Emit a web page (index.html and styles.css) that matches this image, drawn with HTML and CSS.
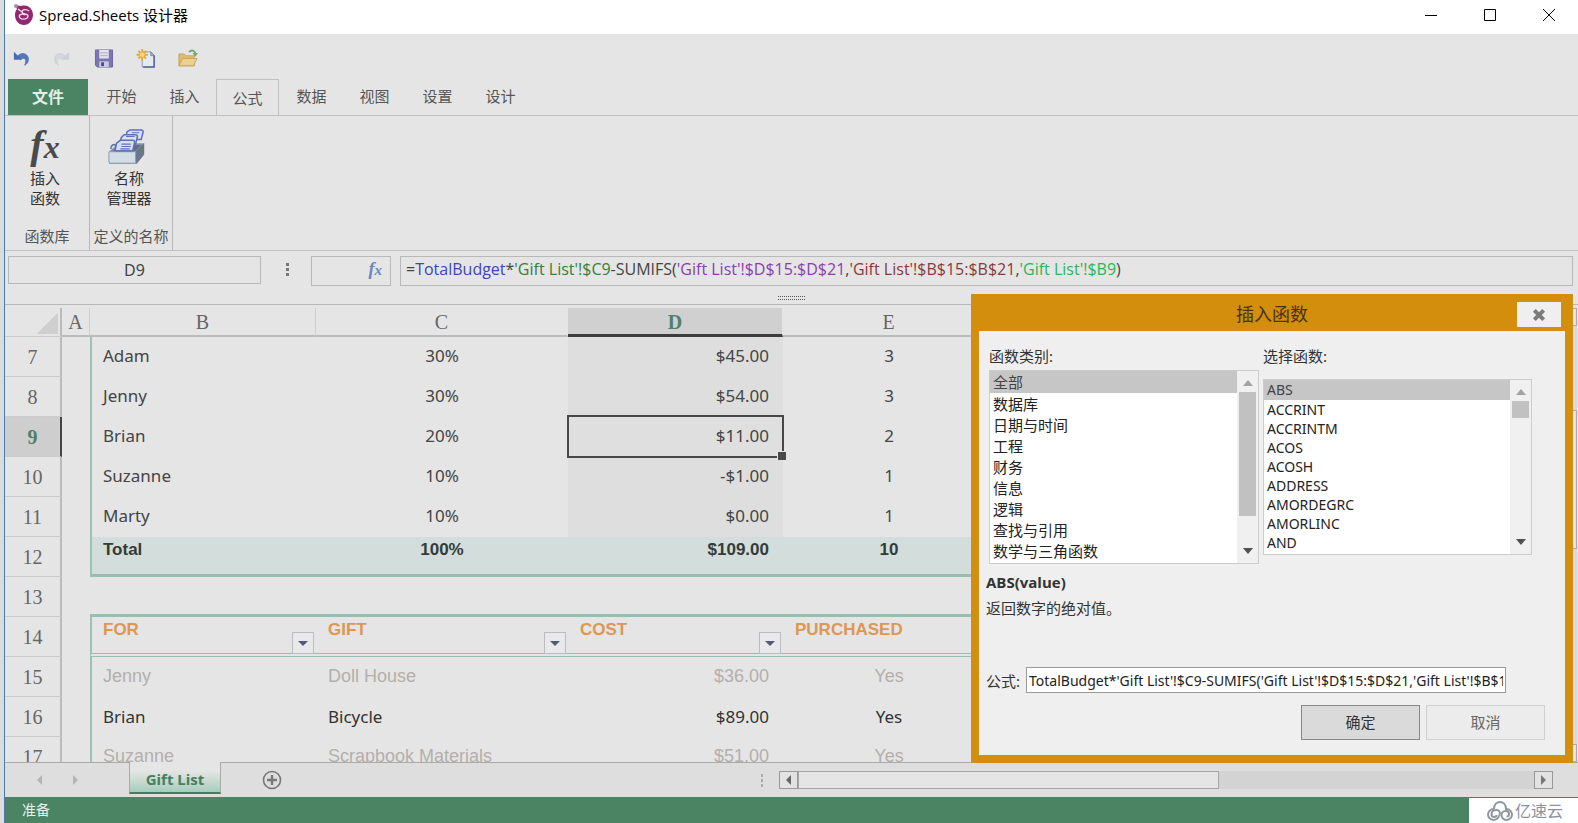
FILE: index.html
```html
<!DOCTYPE html>
<html lang="zh-CN">
<head>
<meta charset="utf-8">
<title>Spread.Sheets 设计器</title>
<link rel="stylesheet" href="styles.css">
</head>
<body>
<div class="app">
  <header class="titlebar">
    <svg class="logo" viewBox="0 0 20 22"><path d="M1 1l6 1c8-2 12 4 12 9s-4 10-9 10-9-4-9-10c0-3 1-5 2-6z" fill="#8f2a70"/><circle cx="2" cy="2" r="2" fill="#b98aa8"/><path d="M4 5l4 3M15 7c-2-2-7-2-7 1s6 1 6 4-5 4-8 2c-2-3 1-5 5-3" fill="none" stroke="#f3d5e8" stroke-width="1.300"/></svg>
    <h1 class="title">Spread.Sheets 设计器</h1>
    <div class="winbtns">
      <button class="winbtn" aria-label="最小化"><svg viewBox="0 0 12 12"><path d="M0 6.500h12" stroke="#000"/></svg></button>
      <button class="winbtn" aria-label="最大化"><svg viewBox="0 0 12 12"><path d="M.5.5h11v11H.5z" fill="none" stroke="#000"/></svg></button>
      <button class="winbtn" aria-label="关闭"><svg viewBox="0 0 12 12"><path d="M0 0l12 12M12 0L0 12" stroke="#000"/></svg></button>
    </div>
  </header>

  <div class="quick">
    <button class="qbtn" aria-label="撤销"><svg viewBox="0 0 20 20"><path d="M5 8c5-6 13-2 12 4 0 3-2 5-4 6 3-6 0-10-5-6" fill="#5577b8" stroke="#5577b8"/><path d="M1 3v9h9z" fill="#4a6db2"/></svg></button>
    <button class="qbtn" aria-label="重做"><svg viewBox="0 0 20 20"><path d="M15 8C10 2 2 6 3 12c0 3 2 5 4 6-3-6 0-10 5-6" fill="#d3d6db" stroke="#cccfd5"/><path d="M19 3v9h-9z" fill="#cdd1d7"/></svg></button>
    <button class="qbtn" aria-label="保存"><svg viewBox="0 0 20 20"><path d="M1 1h18v18H3l-2-2z" fill="#7c75b4" stroke="#6b65a4"/><path d="M5 1h10v9H5z" fill="#dfe2ea"/><path d="M6 4h8M6 7h8" stroke="#a9adbf"/><path d="M5 13h10v6H5z" fill="#c9cbe0"/><path d="M7 14h3v4H7z" fill="#4d4a80"/></svg></button>
    <button class="qbtn" aria-label="新建"><svg viewBox="0 0 20 20"><path d="M6 3h9l4 4v12H6z" fill="#e4e9f2" stroke="#8b98b3"/><path d="M15 3v4h4z" fill="#aab6cd" stroke="#7b88a4"/><path d="M18.500 7v12H7" fill="none" stroke="#4f6796" stroke-width="1.500"/><path d="M6 0v12M0 6h12M2 2l8 8M10 2l-8 8" stroke="#e2a83c" stroke-width="2"/><circle cx="6" cy="6" r="3" fill="#ffd66b" stroke="#e2a83c"/></svg></button>
    <button class="qbtn" aria-label="打开"><svg viewBox="0 0 22 20"><path d="M1 18V5h6l2 2h9v11z" fill="#dfba70" stroke="#c7a35c"/><path d="M1 18l4-8h16l-4 8z" fill="#ecd08e" stroke="#c7a35c"/><path d="M12 3c3-3 6-2 7 1" fill="none" stroke="#6aab70" stroke-width="2"/><path d="M16 4h6l-3 4z" fill="#6aab70"/></svg></button>
  </div>

  <nav class="tabs">
    <button class="tab file">文件</button>
    <button class="tab">开始</button>
    <button class="tab">插入</button>
    <button class="tab active">公式</button>
    <button class="tab">数据</button>
    <button class="tab">视图</button>
    <button class="tab">设置</button>
    <button class="tab">设计</button>
  </nav>

  <section class="ribbon">
    <div class="group">
      <button class="big"><span class="fx fx-lg">f<span class="sub">x</span></span><span>插入<br>函数</span></button>
      <span class="caption">函数库</span>
    </div>
    <div class="group">
      <button class="big"><svg class="bigicon" viewBox="0 0 40 38"><path d="M1 24L11 15h27v12l-8 10H2q-1 0-1-1z" fill="#8794a8"/><path d="M29 24l9-9v12l-8 10z" fill="#68768c"/><path d="M4 24l8-7h23l-7 7z" fill="#5e6d8f"/><path d="M1 24h28v12H2q-1 0-1-2z" fill="#d3dde6" stroke="#8d9db0"/><g fill="#d8dff2" stroke="#5f73b8" stroke-width="1.600"><path d="M20 3l3-2h12q2 0 2 2l-2 8H20q-2 0-1-3z"/><path d="M14 9l3-3h12q2 0 2 2l-2 8H14q-2 0-1-3z"/><path d="M9 15l4-3h13q2 0 2 2l-2 9H9q-2 0-1-3z"/><path d="M14 16h10M14 18.500h10M13 21h10M19 8h9M25 4h8" stroke-width="1.200"/><path d="M3 21c0-4 3-6 6-3" fill="none"/></g></svg><span>名称<br>管理器</span></button>
      <span class="caption">定义的名称</span>
    </div>
  </section>

  <section class="formulabar">
    <input class="namebox" aria-label="名称框" value="D9">
    <span class="dots"><i></i><i></i><i></i></span>
    <button class="fxbox" aria-label="插入函数"><span class="fx fx-sm">f<span class="sub">x</span></span></button>
    <div class="formula" role="textbox" aria-label="编辑栏">=<span class="c-blue">TotalBudget</span>*<span class="c-green">'Gift List'!$C9</span>-SUMIFS(<span class="c-purple">'Gift List'!$D$15:$D$21</span>,<span class="c-red">'Gift List'!$B$15:$B$21</span>,<span class="c-lime">'Gift List'!$B9</span>)</div>
  </section>
  <div class="splitter"><span class="grip"></span></div>

  <main class="sheet">
    <div class="viewport">
    <table class="grid">
      <colgroup><col class="w-h"><col class="w-a"><col class="w-b"><col class="w-c"><col class="w-d"><col class="w-e"><col></colgroup>
      <thead><tr><th class="corner"><span class="tri"></span></th><th>A</th><th>B</th><th>C</th><th class="sel">D</th><th>E</th><th></th></tr></thead>
      <tbody>
        <tr><th>7</th><td></td><td class="b">Adam</td><td class="mid">30%</td><td class="num shade">$45.00</td><td class="mid">3</td><td></td></tr>
        <tr><th>8</th><td></td><td class="b">Jenny</td><td class="mid">30%</td><td class="num shade">$54.00</td><td class="mid">3</td><td></td></tr>
        <tr><th class="sel">9</th><td></td><td class="b">Brian</td><td class="mid">20%</td><td class="num shade current">$11.00<span class="cursor"></span></td><td class="mid">2</td><td></td></tr>
        <tr><th>10</th><td></td><td class="b">Suzanne</td><td class="mid">10%</td><td class="num shade">-$1.00</td><td class="mid">1</td><td></td></tr>
        <tr><th>11</th><td></td><td class="b">Marty</td><td class="mid">10%</td><td class="num shade">$0.00</td><td class="mid">1</td><td></td></tr>
        <tr class="total"><th>12</th><td></td><td class="b">Total</td><td class="mid">100%</td><td class="num">$109.00</td><td class="mid">10</td><td></td></tr>
        <tr class="gap"><th>13</th><td></td><td></td><td></td><td></td><td></td><td></td></tr>
        <tr class="head"><th>14</th><td></td><td class="b">FOR<button class="filter" aria-label="筛选 FOR"></button></td><td>GIFT<button class="filter" aria-label="筛选 GIFT"></button></td><td>COST<button class="filter" aria-label="筛选 COST"></button></td><td>PURCHASED</td><td></td></tr>
        <tr class="done"><th>15</th><td></td><td class="b">Jenny</td><td>Doll House</td><td class="num">$36.00</td><td class="mid">Yes</td><td></td></tr>
        <tr class="open"><th>16</th><td></td><td class="b">Brian</td><td>Bicycle</td><td class="num">$89.00</td><td class="mid">Yes</td><td></td></tr>
        <tr class="done"><th>17</th><td></td><td class="b">Suzanne</td><td>Scrapbook Materials</td><td class="num">$51.00</td><td class="mid">Yes</td><td></td></tr>
      </tbody>
    </table>
    </div>
    <div class="vbar"><span class="vend"></span><span class="vthumb"></span><span class="vend"></span></div>
  </main>

  <div class="sheettabs">
    <div class="tabside">
      <button class="nav" aria-label="上一个"><svg viewBox="0 0 6 10"><path d="M5 0v10L0 5z" fill="#b4b4b4"/></svg></button>
      <button class="nav" aria-label="下一个"><svg viewBox="0 0 6 10"><path d="M0 0v10l5-5z" fill="#b4b4b4"/></svg></button>
      <button class="sheettab">Gift List</button>
      <button class="add" aria-label="新建工作表"><svg viewBox="0 0 20 20"><circle cx="10" cy="10" r="8.500" fill="none" stroke="#777" stroke-width="1.600"/><path d="M10 5v10M5 10h10" stroke="#777" stroke-width="2.400"/></svg></button>
      <span class="dots pale"><i></i><i></i><i></i></span>
    </div>
    <div class="hbar">
      <span class="hend"><svg viewBox="0 0 6 10"><path d="M5 0v10L0 5z" fill="#666"/></svg></span>
      <span class="hthumb"></span>
      <span class="htrack"></span>
      <span class="hend"><svg viewBox="0 0 6 10"><path d="M0 0v10l5-5z" fill="#777"/></svg></span>
    </div>
  </div>

  <footer class="status"><span>准备</span>
    <div class="brand"><svg viewBox="0 0 26 20"><g fill="none" stroke="#9097a0" stroke-width="2"><path d="M7 8C7 3 10 1 13 1s6 2 6 7c4 0 6 3 6 5.500S23 19 19.500 19c-3 0-5-2.500-5-5 0-2 1.500-4 4-4s3.500 1.500 3.500 3-1 2.500-2.500 2.500"/><path d="M7 8c-4 0-6 3-6 5.500S3 19 6.500 19c3 0 5-2.500 6-5 1-3 0-5-3-5s-5 2-5 4 1 3 2.500 3 2.500-1 2.500-2"/></g></svg><span>亿速云</span></div>
  </footer>

  <div class="dialog" role="dialog" aria-labelledby="dlg-title">
    <div class="dlg-head"><h2 id="dlg-title">插入函数</h2><button class="dlg-close" aria-label="关闭"><svg viewBox="0 0 12 12"><path d="M2 2l8 8M10 2l-8 8" stroke="#7c7c7c" stroke-width="3.400"/></svg></button></div>
    <div class="dlg-body">
      <div class="pickers">
        <div class="picker">
          <label for="cat">函数类别:</label>
          <div class="list list-cat">
            <select id="cat" size="9"><option selected>全部</option><option>数据库</option><option>日期与时间</option><option>工程</option><option>财务</option><option>信息</option><option>逻辑</option><option>查找与引用</option><option>数学与三角函数</option></select>
            <span class="sbar"><svg viewBox="0 0 10 6"><path d="M0 6h10L5 0z" fill="#a3a3a3"/></svg><span class="sthumb"></span><svg viewBox="0 0 10 6"><path d="M0 0h10L5 6z" fill="#505050"/></svg></span>
          </div>
        </div>
        <div class="picker">
          <label for="fn">选择函数:</label>
          <div class="list list-fn">
            <select id="fn" size="9"><option selected>ABS</option><option>ACCRINT</option><option>ACCRINTM</option><option>ACOS</option><option>ACOSH</option><option>ADDRESS</option><option>AMORDEGRC</option><option>AMORLINC</option><option>AND</option></select>
            <span class="sbar"><svg viewBox="0 0 10 6"><path d="M0 6h10L5 0z" fill="#a3a3a3"/></svg><span class="sthumb"></span><svg viewBox="0 0 10 6"><path d="M0 0h10L5 6z" fill="#505050"/></svg></span>
          </div>
        </div>
      </div>
      <p class="sig">ABS(value)</p>
      <p class="desc">返回数字的绝对值。</p>
      <div class="frow"><label for="formula">公式:</label><input id="formula" value="TotalBudget*'Gift List'!$C9-SUMIFS('Gift List'!$D$15:$D$21,'Gift List'!$B$15:$B$21,'Gift List'!$B9)"></div>
      <div class="actions"><button class="ok">确定</button><button class="cancel">取消</button></div>
    </div>
  </div>
</div>
</body>
</html>
```
FILE: styles.css
```css
* { box-sizing: border-box; }
body { margin: 0; background: #e5e5e5; font-family: "Noto Sans", "Noto Sans CJK SC", sans-serif; font-size: 15px; color: #444; }
button, input, select { font: inherit; color: inherit; margin: 0; padding: 0; border: 0; background: none; border-radius: 0; outline: 0; }
h1, h2, p { margin: 0; font-weight: normal; }
svg { display: block; }

.app { position: relative; display: flex; flex-direction: column; height: 100vh; overflow: hidden; border-left: 1px solid #4a7ab0; box-shadow: -4px 0 #dcdcdc; margin-left: 4px; }

.titlebar { display: flex; align-items: center; height: 34px; flex: none; background: #fff; color: #000; }
.logo { width: 20px; height: 22px; margin: 0 5px 4px 9px; }
.title { flex: 1; font-family: "Open Sans", "Noto Sans CJK SC", sans-serif; font-size: 15px; line-height: 20px; padding-bottom: 5px; }
.winbtns { display: flex; padding-bottom: 4px; }
.winbtn { width: 59px; height: 30px; display: flex; align-items: center; justify-content: center; }
.winbtn svg { width: 12px; height: 12px; }

.quick { display: flex; height: 45px; flex: none; align-items: center; padding-top: 3px; }
.qbtn { width: 42px; display: flex; justify-content: center; }
.qbtn:first-child { width: 34px; }
.qbtn:nth-child(2) { width: 44px; }
.qbtn svg { height: 19px; width: 20px; }
.qbtn:first-child svg, .qbtn:nth-child(2) svg { width: 18px; height: 18px; }

.tabs { display: flex; height: 37px; flex: none; border-bottom: 1px solid #c0c0c0; padding-left: 3px; }
.tab { width: 63px; font-size: 15px; line-height: 20px; color: #555; padding-bottom: 2px; }
.tab.file { width: 80px; background: #4a8463; color: #e4efe6; font-weight: bold; font-size: 16px; margin-right: 2px; padding: 0; }
.tab.active { border: 1px solid #c0c0c0; border-bottom: 0; padding: 0; }
.tab.active + .tab { margin-left: 1px; }

.ribbon { display: flex; height: 135px; flex: none; border-bottom: 1px solid #c0c0c0; }
.group { display: flex; flex-direction: column; justify-content: space-between; align-items: center; width: 83px; padding: 9px 0 4px; border-right: 1px solid #b8b8b8; }
.group:first-child { width: 85px; }
.group .big { display: flex; flex-direction: column; align-items: center; line-height: 20px; color: #333; padding-right: 4px; }
.bigicon { width: 38px; height: 38px; margin: 3px 4px 2px 0; }
.caption { line-height: 20px; color: #555; white-space: nowrap; }
.fx { font-family: "Liberation Serif", serif; font-style: italic; font-weight: bold; }
.fx-lg { font-size: 40px; line-height: 39px; height: 43px; color: #4a4a4a; }
.fx-lg .sub { font-size: 32px; }
.fx-sm { font-size: 18px; color: #6b87c4; }
.fx-sm .sub { font-size: 15px; }

.formulabar { display: flex; align-items: flex-start; height: 42px; flex: none; padding: 5px 5px 0 3px; }
.namebox { width: 253px; height: 28px; border: 1px solid #b8b8b8; text-align: center; font-size: 16px; }
.dots { width: 50px; height: 26px; padding-left: 2px; display: flex; flex-direction: column; gap: 2px; align-items: center; justify-content: center; }
.dots i { width: 3px; height: 3px; background: #777; }
.dots.pale i { background: #aaa; width: 2px; }
.fxbox { width: 80px; height: 30px; border: 1px solid #b8b8b8; text-align: right; padding-right: 8px; line-height: 24px; padding-bottom: 4px; }
.formula { flex: 1; height: 30px; margin-left: 9px; border: 1px solid #b8b8b8; padding-left: 5px; font-family: "Open Sans", sans-serif; font-size: 16px; line-height: 24px; white-space: nowrap; }
.c-blue { color: #3f45b5; } .c-green { color: #358035; } .c-purple { color: #8d3cae; } .c-red { color: #873a3a; } .c-lime { color: #2db455; }

.splitter { height: 12px; flex: none; border-bottom: 1px solid #b8b8b8; display: flex; justify-content: center; padding-top: 3px; }
.grip { width: 28px; height: 4px; background: repeating-linear-gradient(90deg, #555 0 1px, transparent 1px 2px); border: 0; position: relative; }
.grip::after { content: ""; position: absolute; inset: 1px 0; background: #e5e5e5; }

.sheet { display: flex; flex: 1; min-height: 0; padding-top: 3px; }
.viewport { flex: 1; overflow: hidden; }
.grid { width: 100%; table-layout: fixed; border-collapse: separate; border-spacing: 0; font-size: 17px; }
.w-h { width: 57px; } .w-a { width: 28px; } .w-b { width: 226px; } .w-c { width: 252px; } .w-d { width: 215px; } .w-e { width: 212px; }
.grid th { font: 20px/24px "Liberation Serif", serif; color: #666; padding: 0; }
.grid thead th { height: 29px; border-bottom: 2px solid #bbb; border-right: 1px solid #d0d0d0; padding-top: 1px; }
.grid thead th:nth-child(n+4) { border-right-color: transparent; }
.grid thead th.corner { border-right: 2px solid #bbb; border-bottom: 1px solid #ccc; }
.tri { display: block; width: 22px; height: 22px; margin: 0 2px 0 auto; background: linear-gradient(135deg, transparent 50%, #cfcfcf 50%); }
.grid thead th.sel { background: #d0d0d0; background-clip: padding-box; border-bottom: 3px solid #3d3d3d; color: #4f806b; font-weight: bold; }
.grid tbody th { border-right: 2px solid #bbb; border-bottom: 1px solid #ccc; }
.grid tbody th.sel { background: #cecece; border-right-color: #444; color: #4f806b; font-weight: bold; }
.grid td { position: relative; height: 40px; padding: 0 14px 3px 12px; line-height: 24px; white-space: nowrap; }
.grid .b { border-left: 2px solid #9bc3b5; padding-left: 11px; }
.grid .mid { text-align: center; padding-left: 0; padding-right: 0; }
.grid .num { text-align: right; }
.shade { background: #dedede; }
.current { background: #dfdfdf; z-index: 1; }
.cursor { position: absolute; inset: -2px -1px -1px -1px; border: 2px solid #484848; }
.cursor::after { content: ""; position: absolute; right: -4px; bottom: -4px; width: 8px; height: 8px; background: #484848; border: 1px solid #e5e5e5; border-right: 0; border-bottom: 0; }
.total td:nth-child(n+3) { background: #d3dddb; border-bottom: 3px solid #98beb1; }
.gap td:nth-child(n+3) { border-bottom: 3px solid #98beb1; }
.total td, .head td { font-family: "Liberation Sans", sans-serif; font-weight: bold; vertical-align: top; padding-top: 1px; }
.total td { color: #333c38; }
.head td { color: #dd9753; }
.head td:nth-child(n+3) { border-bottom: 4px double #98beb1; }
.filter { position: absolute; right: 2px; bottom: -1px; width: 22px; height: 22px; border: 1px solid #bbbcc2; background: #e9e9eb; }
.filter::after { content: ""; position: absolute; left: 5px; top: 8px; border: 5px solid transparent; border-top: 5px solid #54587c; border-bottom: 0; }
.done td { font-family: "Liberation Sans", sans-serif; font-size: 18px; color: #b3afab; }
.open td { color: #333; padding-bottom: 0; }

.vbar { width: 20px; display: flex; flex-direction: column; margin-right: 1px; background: #dadada; }
.vend { height: 18px; border: 1px solid #aaa; background: #e5e5e5; }
.vthumb { height: 139px; margin: 84px 0 auto; border: 1px solid #aaa; background: #e5e5e5; }

.sheettabs { display: flex; height: 35px; flex: none; border-top: 1px solid #aaa; background: #dedede; }
.tabside { display: flex; flex: 1; align-items: center; }
.nav { width: 36px; height: 30px; display: flex; justify-content: center; align-items: center; }
.nav:first-child { margin-left: 17px; }
.nav svg { width: 6px; height: 10px; }
.sheettab { width: 92px; align-self: flex-start; margin: -1px 0 0 35px; padding-top: 3px; height: 32px; border-left: 1px solid #aaa; border-right: 1px solid #aaa; border-bottom: 2px solid #3f7f5f; background: linear-gradient(#e5e5e5 30%, #a5cdbd); color: #46815f; font-weight: bold; line-height: 24px; }
.add { margin-left: 41px; width: 20px; height: 20px; }
.tabside .dots { margin-left: auto; width: 36px; }
.hbar { display: flex; width: 50%; max-width: 774px; margin: 8px 25px 8px 0; background: #d3d3d3; }
.hend { width: 19px; border: 1px solid #999; background: #e2e2e2; display: flex; align-items: center; justify-content: center; }
.hend svg { width: 6px; height: 10px; }
.hthumb { flex: 420; border: 1px solid #a5a5a5; background: #e5e5e5; }
.htrack { flex: 316; }

.status { display: flex; justify-content: space-between; align-items: center; height: 26px; flex: none; background: #4a8463; color: #e8f0ea; font-size: 14px; line-height: 20px; padding-left: 17px; }
.brand { align-self: flex-end; display: flex; align-items: center; gap: 2px; width: 109px; height: 25px; background: #fff; padding-left: 18px; color: #8b929c; font-size: 16px; line-height: 20px; }
.brand svg { width: 26px; height: 20px; }

.dialog { position: absolute; top: 294px; right: 5px; width: 602px; border: 8px solid #d28e0c; border-top: 0; background: #efefef; color: #333; }
.dlg-head { position: relative; height: 37px; background: #d28e0c; display: flex; align-items: center; justify-content: center; color: #4a3311; }
.dlg-head h2 { font-size: 18px; line-height: 24px; padding-top: 3px; }
.dlg-close { position: absolute; right: 4px; top: 8px; width: 44px; height: 25px; background: #efefef; display: flex; align-items: center; justify-content: center; }
.dlg-close svg { width: 14px; height: 14px; }
.dlg-body { padding: 15px 20px 15px 7px; }
.pickers { display: flex; gap: 4px; height: 216px; padding-left: 3px; }
.picker label { display: block; line-height: 20px; }
.list { display: flex; border: 1px solid #ccc; background: #fff; }
.list-cat { width: 270px; height: 194px; margin-top: 4px; }
.list-fn { width: 269px; height: 176px; margin-top: 13px; }
.list select { flex: 1; overflow: hidden; }
.list option { padding: 0 0 0 3px; min-height: 0; line-height: 21px; height: 21px; color: #222; }
.list option:checked { background: #c6c6c6 linear-gradient(#c6c6c6, #c6c6c6); color: #444; height: 22px; }
.list-fn option { font-size: 14px; line-height: 19px; height: 19px; }
.list-fn option:checked { height: 20px; }
.sbar { width: 21px; background: #f0f0f0; display: flex; flex-direction: column; align-items: center; padding: 9px 0; }
.sbar svg { width: 10px; height: 6px; }
.sthumb { width: 17px; height: 124px; margin: 6px 0 auto; background: #c1c1c1; }
.list-fn .sthumb { height: 17px; }
.sig { font-family: "Open Sans", sans-serif; font-weight: bold; line-height: 20px; margin-top: 10px; }
.desc { line-height: 20px; margin-top: 6px; }
.frow { display: flex; align-items: center; gap: 6px; margin-top: 49px; }
.frow input { width: 480px; height: 26px; border: 1px solid #999; background: #fff; padding: 0 2px; color: #222; font-size: 14px; }
.actions { display: flex; justify-content: flex-end; gap: 6px; margin-top: 12px; }
.actions button { width: 119px; height: 35px; border: 1px solid #888; background: #dadada; padding-bottom: 2px; }
.actions .cancel { border-color: #d0d0d0; background: #ececec; color: #666; }
```
